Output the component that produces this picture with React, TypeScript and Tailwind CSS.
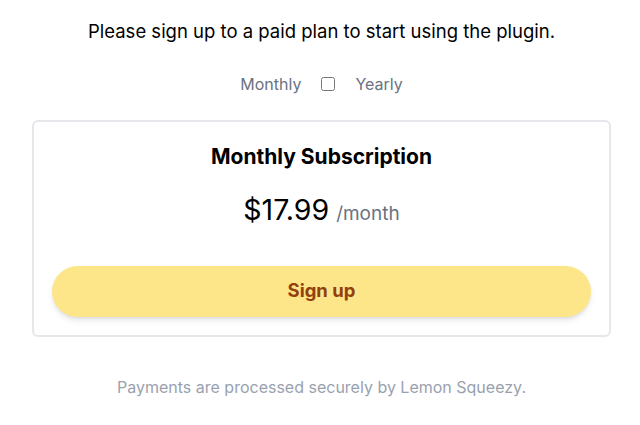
export default function App() {
  return (
    <div className="min-h-screen bg-white font-['Inter',sans-serif] pl-8 pr-[29px] pt-[19px]">
      <p className="text-center text-[18.5px] leading-6 text-black">
        Please sign up to a paid plan to start using the plugin.
      </p>

      {/* billing toggle */}
      <div className="mt-[29px] flex items-center justify-center gap-[20px] text-[16px] leading-6 text-gray-500">
        <span>Monthly</span>
        <input type="checkbox" className="h-[14px] w-[14px]" />
        <span>Yearly</span>
      </div>

      <div className="mt-[24px] rounded-md border-2 border-gray-200 px-[18px] pt-[21px] pb-[18px] text-center">
        <h2 className="text-[21px] font-bold leading-7 text-black">Monthly Subscription</h2>
        <div className="mt-[21px] flex items-baseline justify-center gap-[7px]">
          <span className="text-[28.5px] leading-9 text-black">$17.99</span>
          <span className="text-[19px] text-gray-500">/month</span>
        </div>
        <button className="mt-[37px] h-[51px] w-full rounded-full bg-[#fde68a] text-[18.5px] font-bold text-[#92400e] shadow-md">
          Sign up
        </button>
      </div>

      <p className="mt-[38px] text-center text-[16px] leading-6 text-gray-400">
        Payments are processed securely by Lemon Squeezy.
      </p>
    </div>
  );
}
